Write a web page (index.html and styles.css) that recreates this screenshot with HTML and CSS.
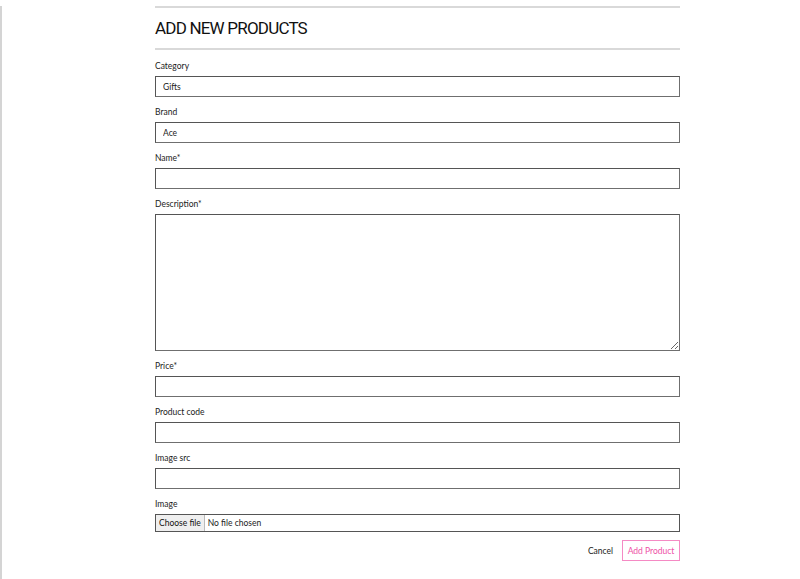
FILE: index.html
```html
<!DOCTYPE html>
<html>
<head>
<meta charset="utf-8">
<link rel="stylesheet" href="styles.css">
</head>
<body>
<div class="page">
  <div class="panel">
    <div class="rule"></div>
    <h1 class="title">ADD NEW PRODUCTS</h1>
    <div class="rule"></div>
    <form class="form">
      <div class="field">
        <label class="label">Category</label>
        <input class="input" type="text" value="Gifts">
      </div>
      <div class="field">
        <label class="label">Brand</label>
        <input class="input" type="text" value="Ace">
      </div>
      <div class="field">
        <label class="label">Name*</label>
        <input class="input" type="text">
      </div>
      <div class="field">
        <label class="label">Description*</label>
        <textarea class="textarea"></textarea>
      </div>
      <div class="field">
        <label class="label">Price*</label>
        <input class="input" type="text">
      </div>
      <div class="field">
        <label class="label">Product code</label>
        <input class="input" type="text">
      </div>
      <div class="field">
        <label class="label">Image src</label>
        <input class="input" type="text">
      </div>
      <div class="field">
        <label class="label">Image</label>
        <div class="file">
          <span class="file-btn">Choose file</span>
          <span class="file-text">No file chosen</span>
        </div>
      </div>
      <div class="actions">
        <button type="button" class="cancel">Cancel</button>
        <button type="button" class="submit">Add Product</button>
      </div>
    </form>
  </div>
</div>
</body>
</html>
```

FILE: styles.css
```css
html, body {
  margin: 0;
  padding: 0;
  background: #fff;
}
body {
  font-family: "Lato", "Liberation Sans", sans-serif;
  color: #222;
}
.page {
  min-height: 579px;
  border-left: 2px solid #d4d4d4;
  box-sizing: border-box;
  padding-left: 153px;
}
.panel {
  width: 525px;
}
.rule {
  height: 2px;
  background: #d9d9d9;
}
.panel > .rule:first-child {
  margin-top: 6px;
}
.title {
  margin: 0;
  height: 40px;
  display: flex;
  align-items: center;
  font-family: "Roboto", "Lato", sans-serif;
  font-size: 17px;
  font-weight: 400;
  color: #111;
  letter-spacing: -0.8px;
}
.form {
  display: flex;
  flex-direction: column;
  padding-top: 10px;
}
.field {
  display: flex;
  flex-direction: column;
  margin-bottom: 9px;
}
.label {
  font-size: 8.5px;
  height: 12px;
  line-height: 12px;
  margin-bottom: 4px;
  color: #222;
}
.input {
  box-sizing: border-box;
  height: 21px;
  width: 100%;
  border: 1px solid #6f6f6f;
  border-top-color: #555;
  border-left-color: #555;
  padding: 0 7px;
  font-family: inherit;
  font-size: 8.5px;
  color: #222;
  margin: 0;
  outline: none;
}
.textarea {
  box-sizing: border-box;
  height: 137px;
  width: 100%;
  border: 1px solid #6f6f6f;
  border-top-color: #555;
  border-left-color: #555;
  margin: 0;
  font-family: inherit;
  font-size: 9px;
  resize: both;
  display: block;
}
.file {
  box-sizing: border-box;
  height: 18px;
  border: 1px solid #555;
  display: flex;
  align-items: center;
  font-size: 8.5px;
}
.file-btn {
  height: 100%;
  box-sizing: border-box;
  display: flex;
  align-items: center;
  padding: 0 3px;
  background: #efefef;
  border-right: 1px solid #bbb;
  color: #111;
}
.file-text {
  padding-left: 3px;
  color: #222;
}
.actions {
  display: flex;
  justify-content: flex-end;
  align-items: center;
  gap: 9px;
  margin-top: -1px;
}
.cancel {
  background: none;
  border: none;
  font-family: inherit;
  font-size: 8.5px;
  color: #222;
  padding: 0;
}
.submit {
  box-sizing: border-box;
  height: 21px;
  width: 58px;
  background: #fff;
  border: 1px solid #f58ac4;
  color: #ee4fa6;
  font-family: inherit;
  font-size: 8.5px;
  padding: 0;
}
```
